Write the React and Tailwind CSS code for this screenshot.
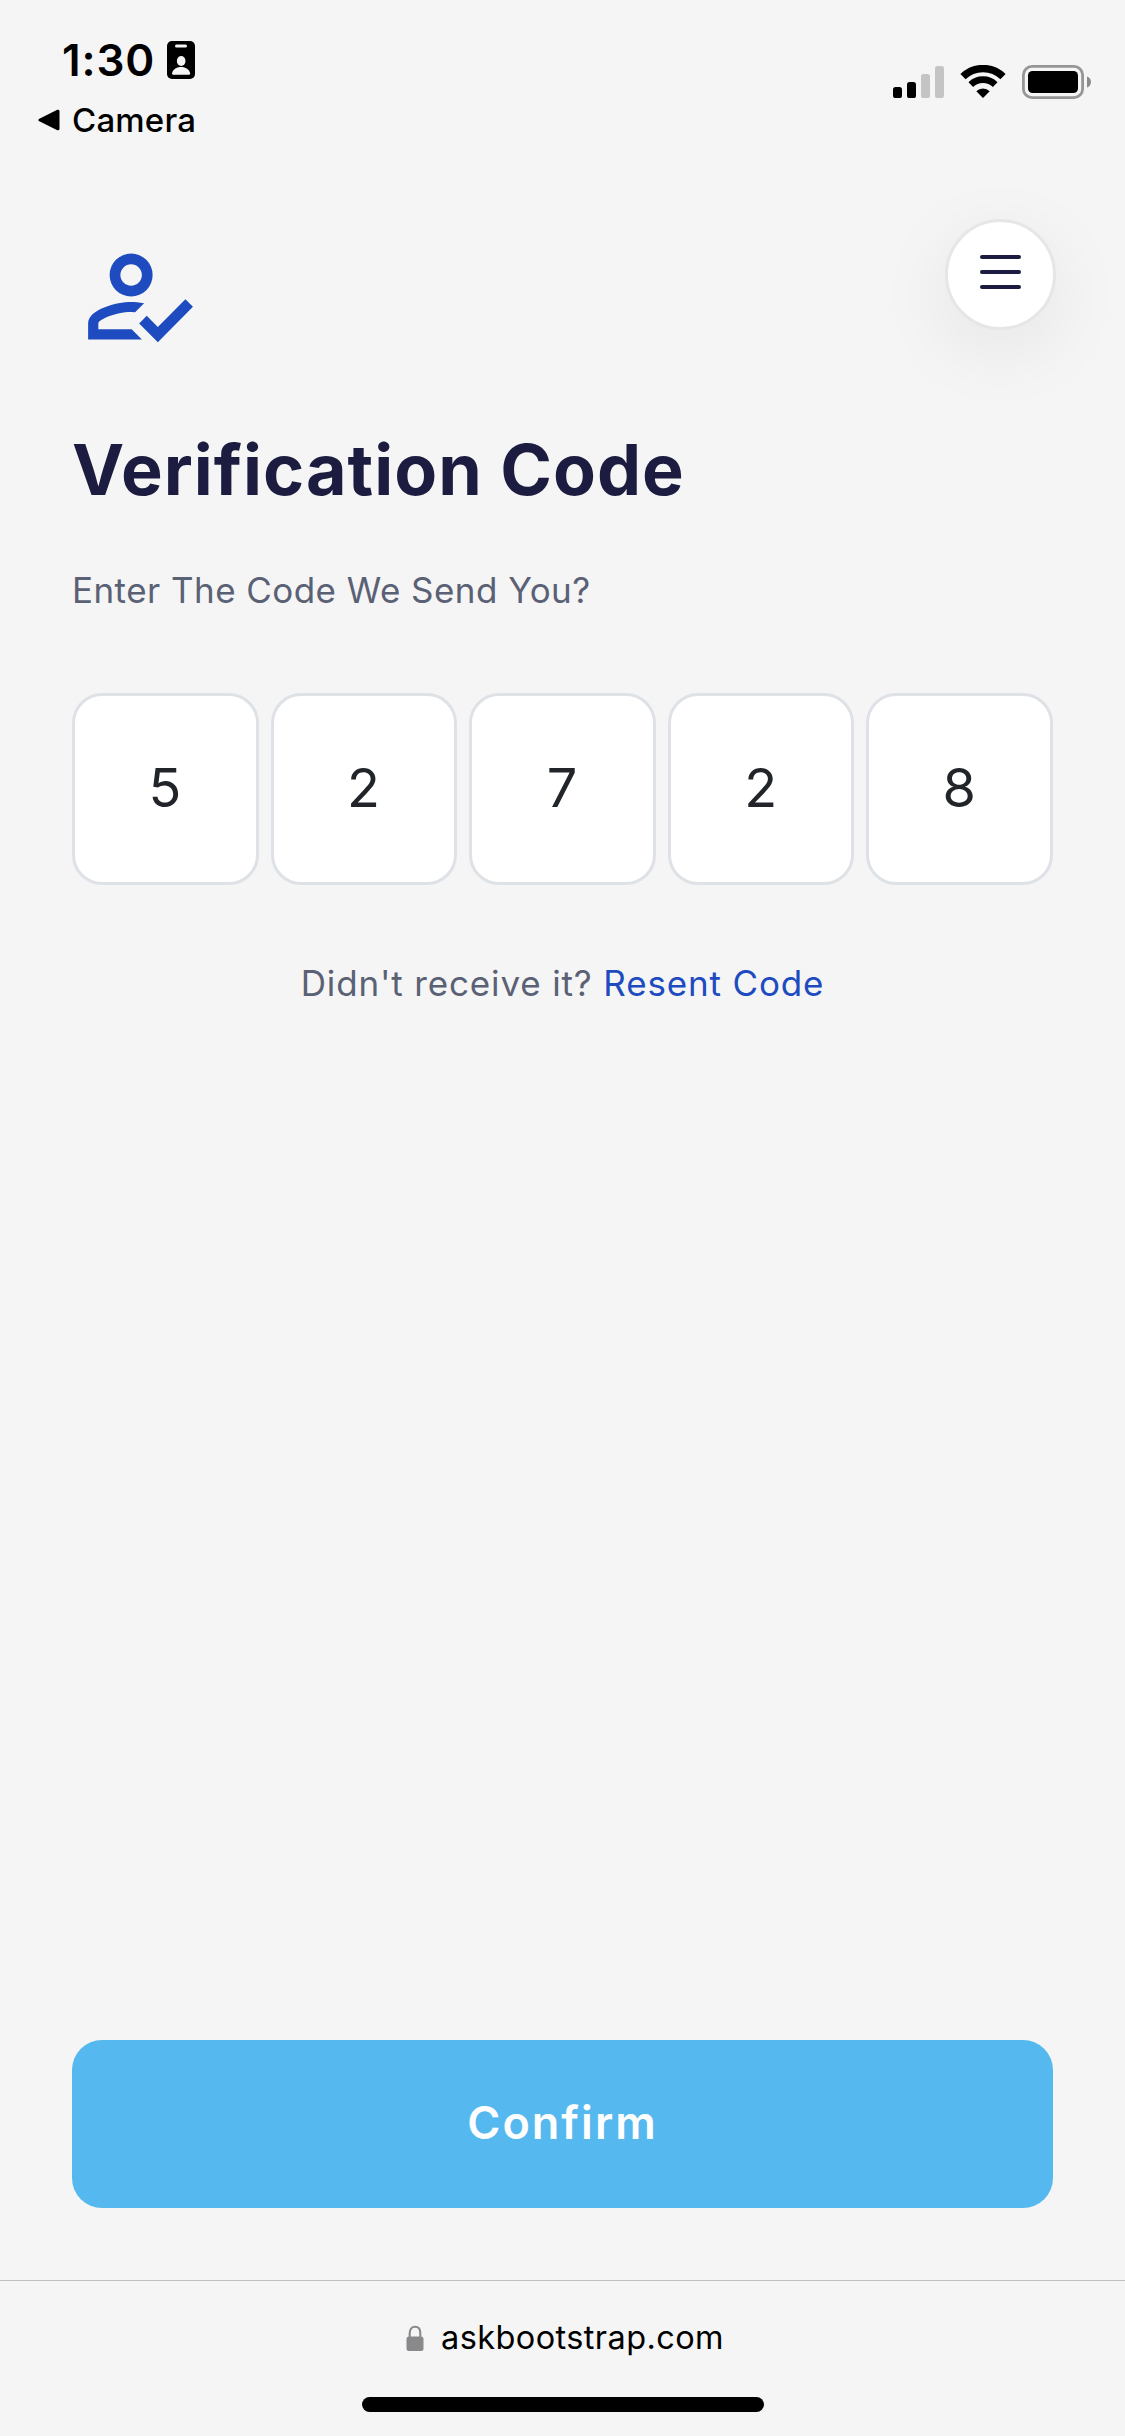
import React from "react";

const digits = ["5", "2", "7", "2", "8"];

function BadgeIcon() {
  return (
    <svg className="h-[38px] w-7" viewBox="0 0 28 38">
      <rect width="28" height="38" rx="5" fill="#000" />
      <rect x="8" y="3.6" width="12" height="3" rx="1.5" fill="#f5f5f5" />
      <ellipse cx="14.2" cy="20" rx="4.3" ry="5" fill="#f5f5f5" />
      <path d="M5 32.6C5.6 28.5 9.4 26 14 26s8.600 2.500 9.200 6.600c0 .8-.4 1.200-1.200 1.200H6.200c-.8 0-1.200-.4-1.200-1.200z" fill="#f5f5f5" />
    </svg>
  );
}

function BackTriangle() {
  return (
    <svg className="h-[22px] w-[22px]" viewBox="0 0 22 22">
      <path d="M2 11 20 2.200v17.600z" stroke="#000" strokeWidth="3" strokeLinejoin="round" />
    </svg>
  );
}

function SignalIcon() {
  return (
    <svg className="h-8 w-[51px]" viewBox="0 0 51 32">
      <rect x="0" y="21" width="9" height="11" rx="2.600" fill="#000" />
      <rect x="14" y="16" width="9" height="16" rx="2.600" fill="#000" />
      <rect x="28" y="8" width="9" height="24" rx="2.600" fill="#c4c4c4" />
      <rect x="42" y="0" width="9" height="32" rx="2.600" fill="#c4c4c4" />
    </svg>
  );
}

function WifiIcon() {
  return (
    <svg className="h-[33px] w-[46px]" viewBox="0 0 46 33">
      <g fill="none" stroke="#000">
        <path d="M3 11.700a28.500 28.500 0 0 1 40 0" strokeWidth="7.400" />
        <path d="M10.800 19.700a17.300 17.300 0 0 1 24.400 0" strokeWidth="6.600" />
      </g>
      <path d="M23 33 16.300 26.300a9.600 9.600 0 0 1 13.400 0z" fill="#000" />
    </svg>
  );
}

function BatteryIcon() {
  return (
    <svg className="h-[34px] w-[70px]" viewBox="0 0 70 34">
      <rect x="1.400" y="1.400" width="59.200" height="31.200" rx="8.600" fill="none" stroke="#969696" strokeWidth="2.800" />
      <rect x="6" y="6" width="50" height="22" rx="4.500" fill="#000" />
      <path d="M65 11.500c2.400.8 4 3 4 5.500s-1.600 4.700-4 5.500z" fill="#8b8b8b" />
    </svg>
  );
}

function AccountCheckIcon() {
  return (
    <svg className="size-[129px]" viewBox="0 0 24 24" fill="#1e4bbf">
      <path d="M21.100 12.500 22.500 13.910 15.970 20.500 12.500 17 13.900 15.590 15.970 17.670 21.100 12.500M11 4A4 4 0 0 1 15 8 4 4 0 0 1 11 12 4 4 0 0 1 7 8 4 4 0 0 1 11 4M11 6A2 2 0 0 0 9 8 2 2 0 0 0 11 10 2 2 0 0 0 13 8 2 2 0 0 0 11 6M11 13C11.680 13 12.500 13.090 13.410 13.260L11.740 14.930 11 14.900C8.030 14.900 4.900 16.360 4.900 17V18.100H11.100L13 20H3V17C3 14.340 8.330 13 11 13Z" />
    </svg>
  );
}

function LockIcon() {
  return (
    <svg className="h-[26px] w-[18px]" viewBox="0 0 18 26">
      <path d="M3.700 13V8.200C3.700 4 6 1.800 9 1.800s5.300 2.200 5.300 6.400V13" fill="none" stroke="#89898b" strokeWidth="2.100" />
      <rect x=".5" y="11.500" width="17" height="14.500" rx="2.500" fill="#89898b" />
    </svg>
  );
}

function StatusBar() {
  return (
    <div className="flex h-[150px] justify-between text-black">
      <div className="flex flex-col pt-9">
        <div className="flex h-12 items-center">
          <span className="w-[167px] pl-[62px] text-[44px] leading-[48px] font-semibold tracking-[0.900px] whitespace-nowrap">1:30</span>
          <BadgeIcon />
        </div>
        <div className="mt-3 flex h-12 items-center gap-3 pl-[38px]">
          <BackTriangle />
          <span className="text-[33px] leading-[48px] font-[450] tracking-[0.200px]">Camera</span>
        </div>
      </div>
      <div className="mt-[65px] mr-[33px] flex h-[34px] items-end gap-4 self-start">
        <span className="mb-px"><SignalIcon /></span>
        <span className="mb-px"><WifiIcon /></span>
        <BatteryIcon />
      </div>
    </div>
  );
}

export default function App() {
  return (
    <div className="flex h-[2436px] w-[1125px] flex-col overflow-hidden bg-[#f5f5f5] font-['Inter',sans-serif]">
      <StatusBar />

      <main className="flex flex-1 flex-col px-[72px]">
        <header className="-mr-[3px] flex h-[212px] items-start justify-between">
          <div className="mt-[82px]"><AccountCheckIcon /></div>
          <button className="mt-[69px] flex size-[111px] items-center justify-center rounded-full border-[3px] border-[#e6e6e6] bg-white pr-px pb-[5px] shadow-[0_20px_80px_rgba(0,0,0,0.070)]">
            <span className="flex flex-col gap-[11px]">
              <span className="h-1 w-[41px] rounded-full bg-[#1b1c3f]" />
              <span className="h-1 w-[41px] rounded-full bg-[#1b1c3f]" />
              <span className="h-1 w-[41px] rounded-full bg-[#1b1c3f]" />
            </span>
          </button>
        </header>

        <h1 className="mt-[68px] text-[70px] leading-[80px] font-[650] tracking-[1px] text-[#1b1c3f]">Verification Code</h1>
        <p className="mt-14 text-[35px] leading-[48px] tracking-[0.450px] text-[#5b6175]">Enter The Code We Send You?</p>

        <div className="mt-[79px] grid grid-cols-5 gap-3">
          {digits.map((digit, i) => (
            <div key={i} className="flex h-48 items-center justify-center rounded-[30px] border-[3px] border-[#dee2e6] bg-white pr-px pb-1 text-[54px] text-[#212529]">
              {digit}
            </div>
          ))}
        </div>

        <p className="mt-[74px] text-center text-[35px] leading-[48px] tracking-[0.850px] whitespace-nowrap text-[#5b6175]">
          Didn't receive it? <a className="text-[#1e4bbf]">Resent Code</a>
        </p>

        <button className="mt-auto mb-[72px] flex h-[168px] items-center justify-center rounded-[30px] bg-[#55b9ef] pb-0.5 text-[45px] font-semibold tracking-[2px] text-white">
          Confirm
        </button>
      </main>

      <footer className="flex h-[156px] flex-col items-center border-t border-[#c0c0c0] text-black">
        <div className="mt-[33px] ml-[5px] flex h-12 items-center gap-[17px]">
          <LockIcon />
          <span className="text-[32.500px] leading-[48px] tracking-[0.400px]">askbootstrap.com</span>
        </div>
        <div className="mt-[35px] h-[15px] w-[402px] rounded-full bg-black" />
      </footer>
    </div>
  );
}
